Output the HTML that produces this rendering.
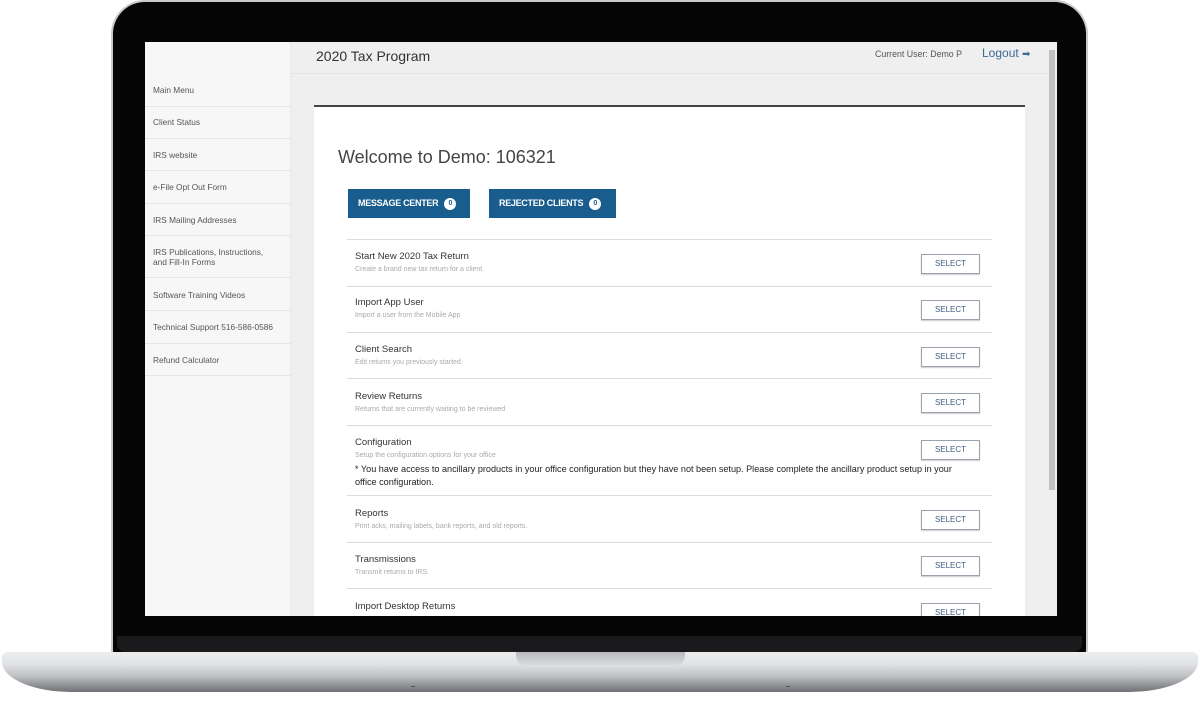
<!DOCTYPE html>
<html><head><style>
*{margin:0;padding:0;box-sizing:border-box}
body{width:1200px;height:707px;background:#fff;position:relative;overflow:hidden;font-family:"Liberation Sans",sans-serif}
.a{position:absolute}
.bezel{left:111px;top:0;width:977px;height:656px;background:#050505;border-radius:34px 34px 6px 6px;border:2px solid #c9c9c9;border-bottom:none}
.screen{left:145px;top:42px;width:912px;height:574px;background:#efefef;overflow:hidden}
.side{left:0;top:0;width:146px;height:574px;background:#f7f7f7;border-right:1px solid #e8e8e8}
.side div{position:absolute;left:8px;font-size:8.3px;color:#555;line-height:10px}
.side hr{position:absolute;left:0;width:146px;border:none;border-top:1px solid #e6e6e6}
.base{left:2px;top:652px;width:1196px;height:40px;border-radius:6px 6px 70px 70px/6px 6px 30px 30px;background:linear-gradient(#eceded 0,#e2e3e5 30%,#c0c1c4 60%,#8e8f92 85%,#6f7073 100%)}
.notch{left:516px;top:652px;width:169px;height:15px;border-radius:0 0 12px 12px;background:linear-gradient(#b9babd,#dedfe1)}
.row{position:absolute;left:202px;width:645px;border-top:1px solid #dcdcdc}
.t{position:absolute;left:8px;font-size:9.5px;color:#333}
.s{position:absolute;left:8px;font-size:7px;color:#aaa}
.sel{position:absolute;left:574px;width:59px;height:20px;border:1px solid #9aa3ad;background:#fff;font-size:8px;color:#3f5f80;text-align:center;line-height:18px;box-shadow:0 1px 1px #ccc}
.btn{position:absolute;top:147px;height:29px;background:#195c8e;color:#fff;font-size:9px;font-weight:bold;line-height:29px;padding-left:10px;letter-spacing:-0.3px}
.btn span{display:inline-block;width:12px;height:12px;border-radius:6px;background:#fff;color:#195c8e;font-size:7px;text-align:center;line-height:12px;margin-left:6px;vertical-align:1px}
</style></head><body>
<div class="a bezel"></div>
<div class="a" style="left:117px;top:636px;width:965px;height:16px;background:#1a1a1c;border-radius:0 0 8px 8px"></div>
<div class="a base"></div>
<div class="a notch"></div>
<div class="a" style="left:411px;top:686px;width:4px;height:1px;background:#555"></div>
<div class="a" style="left:786px;top:686px;width:4px;height:1px;background:#555"></div>
<div class="a screen">
  <div class="a side">
    <div style="top:43px">Main Menu</div><hr style="top:64px">
    <div style="top:75px">Client Status</div><hr style="top:96px">
    <div style="top:108px">IRS website</div><hr style="top:128px">
    <div style="top:140px">e-File Opt Out Form</div><hr style="top:161px">
    <div style="top:173px">IRS Mailing Addresses</div><hr style="top:193px">
    <div style="top:205px">IRS Publications, Instructions,<br>and Fill-In Forms</div><hr style="top:235px">
    <div style="top:248px">Software Training Videos</div><hr style="top:268px">
    <div style="top:280px">Technical Support 516-586-0586</div><hr style="top:301px">
    <div style="top:313px">Refund Calculator</div><hr style="top:333px">
  </div>
  <div class="a" style="left:146px;top:31px;width:758px;border-top:1px solid #e4e4e4"></div>
  <div class="a" style="left:171px;top:6px;font-size:14px;color:#333">2020 Tax Program</div>
  <div class="a" style="left:730px;top:7px;font-size:8.8px;color:#555">Current User: Demo P</div>
  <div class="a" style="left:837px;top:4px;font-size:12px;color:#3a6a96">Logout <span style="font-size:10px">&#x27A1;</span></div>
  <div class="a" style="left:903px;top:0;width:9px;height:574px;background:#efefef"></div>
  <div class="a" style="left:904px;top:8px;width:6px;height:440px;background:#c2c2c2"></div>
  <div class="a" style="left:169px;top:63px;width:711px;height:520px;background:#fff;border-top:2px solid #444">
    <div class="a" style="left:24px;top:40px;font-size:18px;color:#444">Welcome to Demo: 106321</div>
    <div class="btn" style="left:34px;top:82px;width:122px">MESSAGE CENTER<span>0</span></div>
    <div class="btn" style="left:175px;top:82px;width:127px">REJECTED CLIENTS<span>0</span></div>
  </div>
  <div style="position:absolute;left:0;top:0">
    <div class="row" style="top:197px"><div class="t" style="top:11px">Start New 2020 Tax Return</div><div class="s" style="top:26px">Create a brand new tax return for a client.</div><div class="sel" style="top:14px">SELECT</div></div>
    <div class="row" style="top:244px"><div class="t" style="top:10px">Import App User</div><div class="s" style="top:25px">Import a user from the Mobile App</div><div class="sel" style="top:13px">SELECT</div></div>
    <div class="row" style="top:290px"><div class="t" style="top:11px">Client Search</div><div class="s" style="top:26px">Edit returns you previously started.</div><div class="sel" style="top:14px">SELECT</div></div>
    <div class="row" style="top:336px"><div class="t" style="top:12px">Review Returns</div><div class="s" style="top:27px">Returns that are currently waiting to be reviewed</div><div class="sel" style="top:14px">SELECT</div></div>
    <div class="row" style="top:383px"><div class="t" style="top:11px">Configuration</div><div class="s" style="top:26px">Setup the configuration options for your office</div><div class="sel" style="top:14px">SELECT</div><div class="t" style="top:37px;font-size:9.1px;line-height:13px;width:615px;color:#222">* You have access to ancillary products in your office configuration but they have not been setup. Please complete the ancillary product setup in your office configuration.</div></div>
    <div class="row" style="top:453px"><div class="t" style="top:12px">Reports</div><div class="s" style="top:27px">Print acks, mailing labels, bank reports, and old reports.</div><div class="sel" style="top:14px">SELECT</div></div>
    <div class="row" style="top:500px"><div class="t" style="top:11px">Transmissions</div><div class="s" style="top:26px">Transmit returns to IRS.</div><div class="sel" style="top:13px">SELECT</div></div>
    <div class="row" style="top:546px"><div class="t" style="top:12px">Import Desktop Returns</div><div class="sel" style="top:14px">SELECT</div></div>
  </div>
</div>
</body></html>
